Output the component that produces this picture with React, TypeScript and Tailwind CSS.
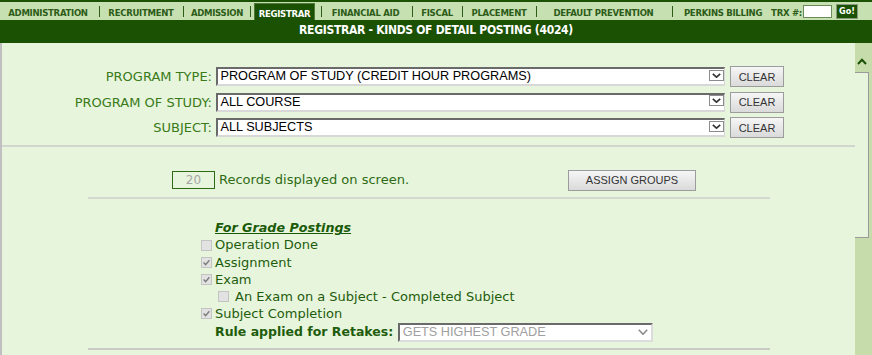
import React from 'react';

const condensed = "font-['DejaVu_Sans_Condensed','DejaVu_Sans',sans-serif]";
const verdana = "font-['DejaVu_Sans',Verdana,sans-serif]";
const arial = "font-['Liberation_Sans',Arial,sans-serif]";

function Sep({ className = '' }: { className?: string }) {
  return <span className={`w-px h-[11px] self-center bg-[#2c5c18] ${className}`} />;
}

function NavText({ children, className = '' }: { children: React.ReactNode; className?: string }) {
  return (
    <span className={`flex items-center justify-center pt-[4px] whitespace-nowrap ${className}`}>
      {children}
    </span>
  );
}

function Chevron({ color = '#333', w = 9, h = 5 }: { color?: string; w?: number; h?: number }) {
  return (
    <svg width={w} height={h} viewBox={`0 0 ${w} ${h}`}>
      <path d={`M0.8 0.8 L${w / 2} ${h - 0.8} L${w - 0.8} 0.8`} fill="none" stroke={color} strokeWidth="1.6" />
    </svg>
  );
}

function FakeSelect({ value }: { value: string }) {
  return (
    <div className="ml-[4px] w-[509px] h-[19px] flex bg-white border-t-2 border-l-2 border-b-2 border-r border-t-[#6a6a6a] border-l-[#6a6a6a] border-b-[#d8d8d8] border-r-[#d8d8d8]">
      <span className={`flex-1 pl-[2.5px] text-[12.7px] leading-[15px] text-black whitespace-nowrap ${arial}`}>{value}</span>
      <span className="w-[15px] h-[11px] mt-[0.5px] border border-[#8c8c8c] bg-white flex items-center justify-center">
        <Chevron color="#333" w={9} h={5} />
      </span>
    </div>
  );
}

function GrayButton({ children, className = '' }: { children: React.ReactNode; className?: string }) {
  return (
    <button
      className={`h-[21px] border border-[#9c9c9c] bg-linear-to-b from-[#f6f6f6] to-[#dadada] text-[11px] text-[#333] flex items-center justify-center ${arial} ${className}`}
    >
      {children}
    </button>
  );
}

function Box({ checked }: { checked?: boolean }) {
  return (
    <span className="w-[11px] h-[11px] border border-[#c4c4c4] bg-[#e2e2e2] flex items-center justify-center shrink-0">
      {checked && (
        <svg width="9" height="9" viewBox="0 0 9 9">
          <path d="M1.6 4.6 L3.6 6.6 L7.4 2.2" fill="none" stroke="#7d7d7d" strokeWidth="1.4" />
        </svg>
      )}
    </span>
  );
}

function FormRow({ label, value }: { label: string; value: string }) {
  return (
    <div className="h-[25.5px] flex items-center">
      <span className={`w-[210px] text-right text-[13px] text-[#3a7a18] whitespace-nowrap ${verdana}`}>{label}</span>
      <FakeSelect value={value} />
      <GrayButton className="ml-[5px] w-[54px]">CLEAR</GrayButton>
    </div>
  );
}

function CheckRow({ label, checked, indent }: { label: string; checked?: boolean; indent?: boolean }) {
  return (
    <div className={`h-[17.2px] flex items-center ${indent ? 'pl-[17px]' : ''}`}>
      <Box checked={checked} />
      <span className={`${indent ? 'ml-[6px]' : 'ml-[3px]'} text-[13px] text-[#1f5c0c] whitespace-nowrap ${verdana}`}>{label}</span>
    </div>
  );
}

export default function App() {
  return (
    <div className="w-[872px] h-[355px] overflow-hidden bg-[#e6f5dc] flex flex-col">
      {/* top module bar */}
      <div className={`h-[20px] border-t-2 border-[#1a5102] bg-[#c7e0b2] flex text-[9.5px] font-bold tracking-[-0.3px] text-[#2c5c18] ${condensed}`}>
        <NavText className="ml-[8px] w-[80px]">ADMINISTRATION</NavText>
        <Sep className="ml-[11px]" />
        <NavText className="ml-[8px] w-[66px]">RECRUITMENT</NavText>
        <Sep className="ml-[9px]" />
        <NavText className="ml-[8px] w-[50px]">ADMISSION</NavText>
        <Sep className="ml-[8px]" />
        <NavText className="ml-[3px] w-[61px] mt-[1px] pt-[3px] bg-[#1a5102] border border-b-0 border-[#4f7a3a] text-white">REGISTRAR</NavText>
        <Sep className="ml-[6px]" />
        <NavText className="ml-[9px] w-[69px]">FINANCIAL AID</NavText>
        <Sep className="ml-[12px]" />
        <NavText className="ml-[8px] w-[32px]">FISCAL</NavText>
        <Sep className="ml-[9px]" />
        <NavText className="ml-[8px] w-[56px]">PLACEMENT</NavText>
        <Sep className="ml-[9px]" />
        <NavText className="ml-[14px] w-[105px]">DEFAULT PREVENTION</NavText>
        <Sep className="ml-[16px]" />
        <NavText className="ml-[11px] w-[78px]">PERKINS BILLING</NavText>
        <NavText className="ml-[9px] w-[31px]">TRX #:</NavText>
        <span className="ml-[1px] mt-[3px] w-[29px] h-[13px] bg-white border border-[#6b8b5b]" />
        <span className="ml-[4px] mt-[2px] w-[22px] h-[15px] bg-[#1a5102] border border-[#8a9a80] text-white text-[9px] tracking-normal flex items-center justify-center">
          Go!
        </span>
      </div>

      {/* title */}
      <div className={`h-[23px] bg-[#1a5102] text-white text-[12px] font-bold tracking-[-0.3px] flex items-center justify-center pb-[3px] ${condensed}`}>
        REGISTRAR - KINDS OF DETAIL POSTING (4024)
      </div>

      <div className="flex flex-1 min-h-0">
        <div className="flex-1 border-l-2 border-[#c0c0c0] bg-[#e6f5dc] flex flex-col">
          <div className="pt-[21px]">
            <FormRow label="PROGRAM TYPE:" value="PROGRAM OF STUDY (CREDIT HOUR PROGRAMS)" />
            <FormRow label="PROGRAM OF STUDY:" value="ALL COURSE" />
            <FormRow label="SUBJECT:" value="ALL SUBJECTS" />
          </div>
          <div className="mt-[4.5px] h-[2px] bg-[#d2d6cf]" />

          <div className="mt-[21px] h-[24px] flex items-center">
            <div className={`ml-[170px] w-[43px] h-[18px] border border-[#2f6b14] flex items-center justify-center text-[12px] text-[#a6a6a6] ${verdana}`}>
              20
            </div>
            <span className={`ml-[4px] w-[349px] text-[13px] text-[#2f6b14] whitespace-nowrap ${verdana}`}>Records displayed on screen.</span>
            <GrayButton className="w-[128px]">ASSIGN GROUPS</GrayButton>
          </div>
          <div className="mt-[5px] ml-[86px] w-[682px] h-[2px] bg-[#d4d8d0]" />

          <div className="mt-[20.4px] pl-[199px]">
            <div className="h-[17.2px] flex items-center">
              <span className={`ml-[14px] text-[12.7px] font-bold italic underline text-[#1b5a08] ${verdana}`}>For Grade Postings</span>
            </div>
            <CheckRow label="Operation Done" />
            <CheckRow label="Assignment" checked />
            <CheckRow label="Exam" checked />
            <CheckRow label="An Exam on a Subject - Completed Subject" indent />
            <CheckRow label="Subject Completion" checked />
            <div className="h-[19px] flex items-center">
              <span className={`ml-[14px] text-[12.5px] font-bold text-[#1f5c0c] whitespace-nowrap ${verdana}`}>Rule applied for Retakes:</span>
              <div className="ml-[5px] w-[255px] h-[19px] flex items-center bg-white border-t-2 border-l-2 border-b-2 border-r-2 border-t-[#6a6a6a] border-l-[#6a6a6a] border-b-[#dcdcdc] border-r-[#dcdcdc]">
                <span className={`flex-1 pl-[2.5px] text-[12.7px] text-[#a0a0a0] whitespace-nowrap ${arial}`}>GETS HIGHEST GRADE</span>
                <span className="mr-[3px]">
                  <Chevron color="#8a8a8a" w={10} h={6} />
                </span>
              </div>
            </div>
          </div>
          <div className="mt-[6.4px] ml-[86px] w-[682px] h-[2px] bg-[#c8ccc4]" />
        </div>

        {/* scrollbar */}
        <div className="w-[17px] bg-[#c6dcab] flex flex-col">
          <div className="h-[28.7px] pt-[15px] pl-[2px]">
            <svg width="10" height="7" viewBox="0 0 10 7">
              <path d="M1 6 L5 1.8 L9 6" fill="none" stroke="#1a5102" strokeWidth="2" />
            </svg>
          </div>
          <div className="w-[14px] h-[166.6px] bg-[#e6f5dc] border-t border-r border-b border-[#9a9a9a]" />
        </div>
      </div>
    </div>
  );
}
